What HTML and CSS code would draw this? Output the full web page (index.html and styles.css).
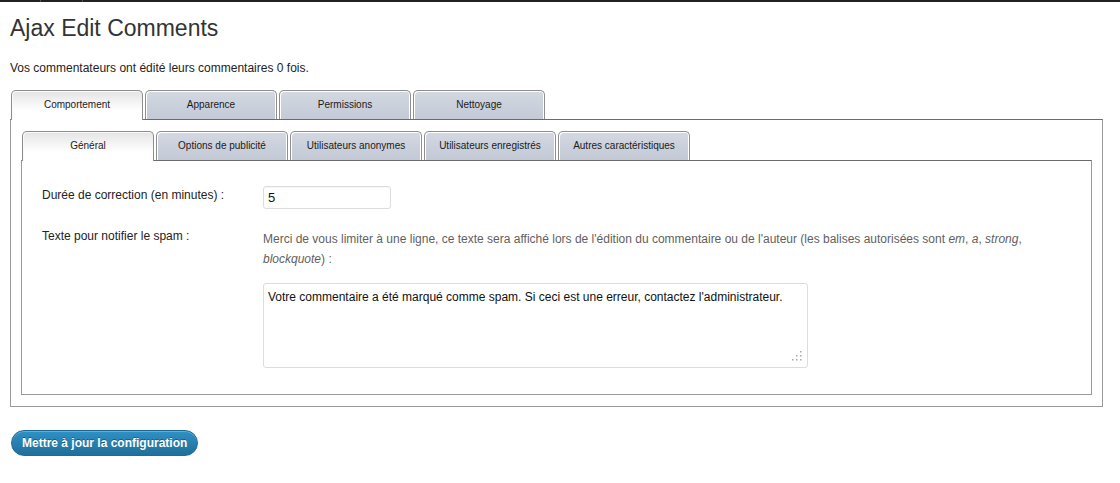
FILE: index.html
```html
<!DOCTYPE html>
<html lang="fr">
<head>
<meta charset="utf-8">
<title>Ajax Edit Comments</title>
<link rel="stylesheet" href="styles.css">
</head>
<body>
<div class="adminbar"><span class="seg seg-a"></span><span class="seg seg-b"></span><span class="seg seg-rest"></span></div>
<div class="wrap">
  <h1 class="page-title">Ajax Edit Comments</h1>
  <p class="intro">Vos commentateurs ont édité leurs commentaires 0 fois.</p>

  <div class="tabset">
    <ul class="tab-list">
      <li class="tab active">Comportement</li>
      <li class="tab">Apparence</li>
      <li class="tab">Permissions</li>
      <li class="tab">Nettoyage</li>
    </ul>
    <div class="panel outer">
      <ul class="tab-list">
        <li class="tab active">Général</li>
        <li class="tab">Options de publicité</li>
        <li class="tab">Utilisateurs anonymes</li>
        <li class="tab">Utilisateurs enregistrés</li>
        <li class="tab">Autres caractéristiques</li>
      </ul>
      <div class="panel inner">
        <div class="form-grid">
          <label class="field-label" for="minutes">Durée de correction (en minutes) :</label>
          <div class="field"><input id="minutes" class="text-input" type="text" value="5"></div>

          <label class="field-label label-spam" for="spam">Texte pour notifier le spam :</label>
          <div class="field">
            <p class="desc">Merci de vous limiter à une ligne, ce texte sera affiché lors de l'édition du commentaire ou de l'auteur (les balises autorisées sont <em>em</em>, <em>a</em>, <em>strong</em>,<br><em>blockquote</em>) :</p>
            <div class="ta-wrap">
              <textarea id="spam" class="text-area">Votre commentaire a été marqué comme spam. Si ceci est une erreur, contactez l'administrateur.</textarea>
              <svg class="grip" width="10" height="10" viewBox="0 0 10 10" aria-hidden="true">
                <rect x="8" y="0" width="1.5" height="1.5" fill="#aaa"/>
                <rect x="8" y="4" width="1.5" height="1.5" fill="#aaa"/>
                <rect x="4" y="4" width="1.5" height="1.5" fill="#aaa"/>
                <rect x="8" y="8" width="1.5" height="1.5" fill="#aaa"/>
                <rect x="4" y="8" width="1.5" height="1.5" fill="#aaa"/>
                <rect x="0" y="8" width="1.5" height="1.5" fill="#aaa"/>
              </svg>
            </div>
          </div>
        </div>
      </div>
    </div>
  </div>

  <button class="btn-primary" type="button">Mettre à jour la configuration</button>
</div>
</body>
</html>
```

FILE: styles.css
```css
html, body {
  margin: 0;
  padding: 0;
  background: #fff;
}

body {
  font-family: "Liberation Sans", Arial, sans-serif;
  font-size: 12px;
  color: #333;
}

.adminbar {
  display: flex;
  height: 2px;
  background: #222;
}

.seg {
  display: block;
  height: 2px;
}

.seg-a { width: 40px; border-right: 1px solid #555; }
.seg-b { width: 41px; border-right: 1px solid #555; }
.seg-rest { flex: 1; }

.wrap {
  padding-left: 10px;
  width: 1093px;
}

.page-title {
  margin: 12px 0 0;
  font-size: 23px;
  line-height: 29px;
  font-weight: normal;
  color: #333;
}

.intro {
  margin: 16px 0 0;
  font-size: 12px;
  line-height: 18px;
  color: #222;
}

.tabset {
  margin-top: 13px;
}

.tab-list {
  display: flex;
  align-items: flex-start;
  gap: 2px;
  list-style: none;
  margin: 0;
  padding: 0 0 0 1px;
}

.tab {
  box-sizing: border-box;
  width: 132px;
  height: 29px;
  padding-bottom: 2px;
  border: 1px solid #8e8e8e;
  border-bottom: 0;
  border-radius: 5px 5px 0 0;
  background: linear-gradient(#d3d8e1, #c3cad6);
  box-shadow: inset 1px 1px 0 #fff, inset -1px 0 0 #fff;
  display: flex;
  align-items: center;
  justify-content: center;
  font-size: 10px;
  color: #1a1a1a;
  white-space: nowrap;
}

.tab.active {
  height: 30px;
  margin-bottom: -1px;
  padding-bottom: 3px;
  background: linear-gradient(#e4e4e4, #f6f6f6 45%, #fff 70%);
  box-shadow: inset 1px 1px 0 #fafafa;
  position: relative;
  z-index: 1;
}

.panel {
  border: 1px solid #9a9a9a;
  border-top-color: #6b6b6b;
  background: #fff;
}

.panel.outer {
  padding: 11px 10px;
}

.panel.inner {
  padding: 25px 20px 26px 20px;
}

.form-grid {
  display: grid;
  grid-template-columns: 221px 1fr;
  row-gap: 18px;
  align-items: start;
}

.field-label {
  font-size: 12px;
  line-height: 18px;
  color: #222;
}

.text-input {
  display: block;
  box-sizing: border-box;
  width: 128px;
  height: 23px;
  margin: 0;
  padding: 0 4px;
  border: 1px solid #dcdcdc;
  border-radius: 3px;
  font-family: "Liberation Sans", Arial, sans-serif;
  font-size: 13px;
  color: #111;
  background: #fff;
  box-shadow: inset 0 1px 1px rgba(0,0,0,0.03);
}

.desc {
  margin: 0;
  padding-top: 2px;
  font-size: 12px;
  line-height: 20px;
  color: #5f5f5f;
}

.desc em {
  font-style: italic;
}

.ta-wrap {
  position: relative;
  width: 545px;
  margin-top: 14px;
}

.text-area {
  display: block;
  box-sizing: border-box;
  width: 545px;
  height: 85px;
  margin: 0;
  padding: 4px;
  border: 1px solid #dcdcdc;
  border-radius: 3px;
  font-family: "Liberation Sans", Arial, sans-serif;
  font-size: 12px;
  line-height: 18px;
  color: #111;
  resize: none;
  background: #fff;
}

.grip {
  position: absolute;
  right: 6px;
  bottom: 7px;
}

.btn-primary {
  display: block;
  margin: 23px 0 0 1px;
  box-sizing: border-box;
  height: 26px;
  padding: 0 10px;
  border: 1px solid #1e6b94;
  border-radius: 13px;
  background: linear-gradient(#2f91c5, #1f6f9a);
  color: #fff;
  font-family: "Liberation Sans", Arial, sans-serif;
  font-size: 12px;
  font-weight: bold;
  text-shadow: 0 -1px 0 rgba(0,0,0,0.35);
  box-shadow: inset 0 1px 0 rgba(255,255,255,0.25);
  cursor: pointer;
}
```
